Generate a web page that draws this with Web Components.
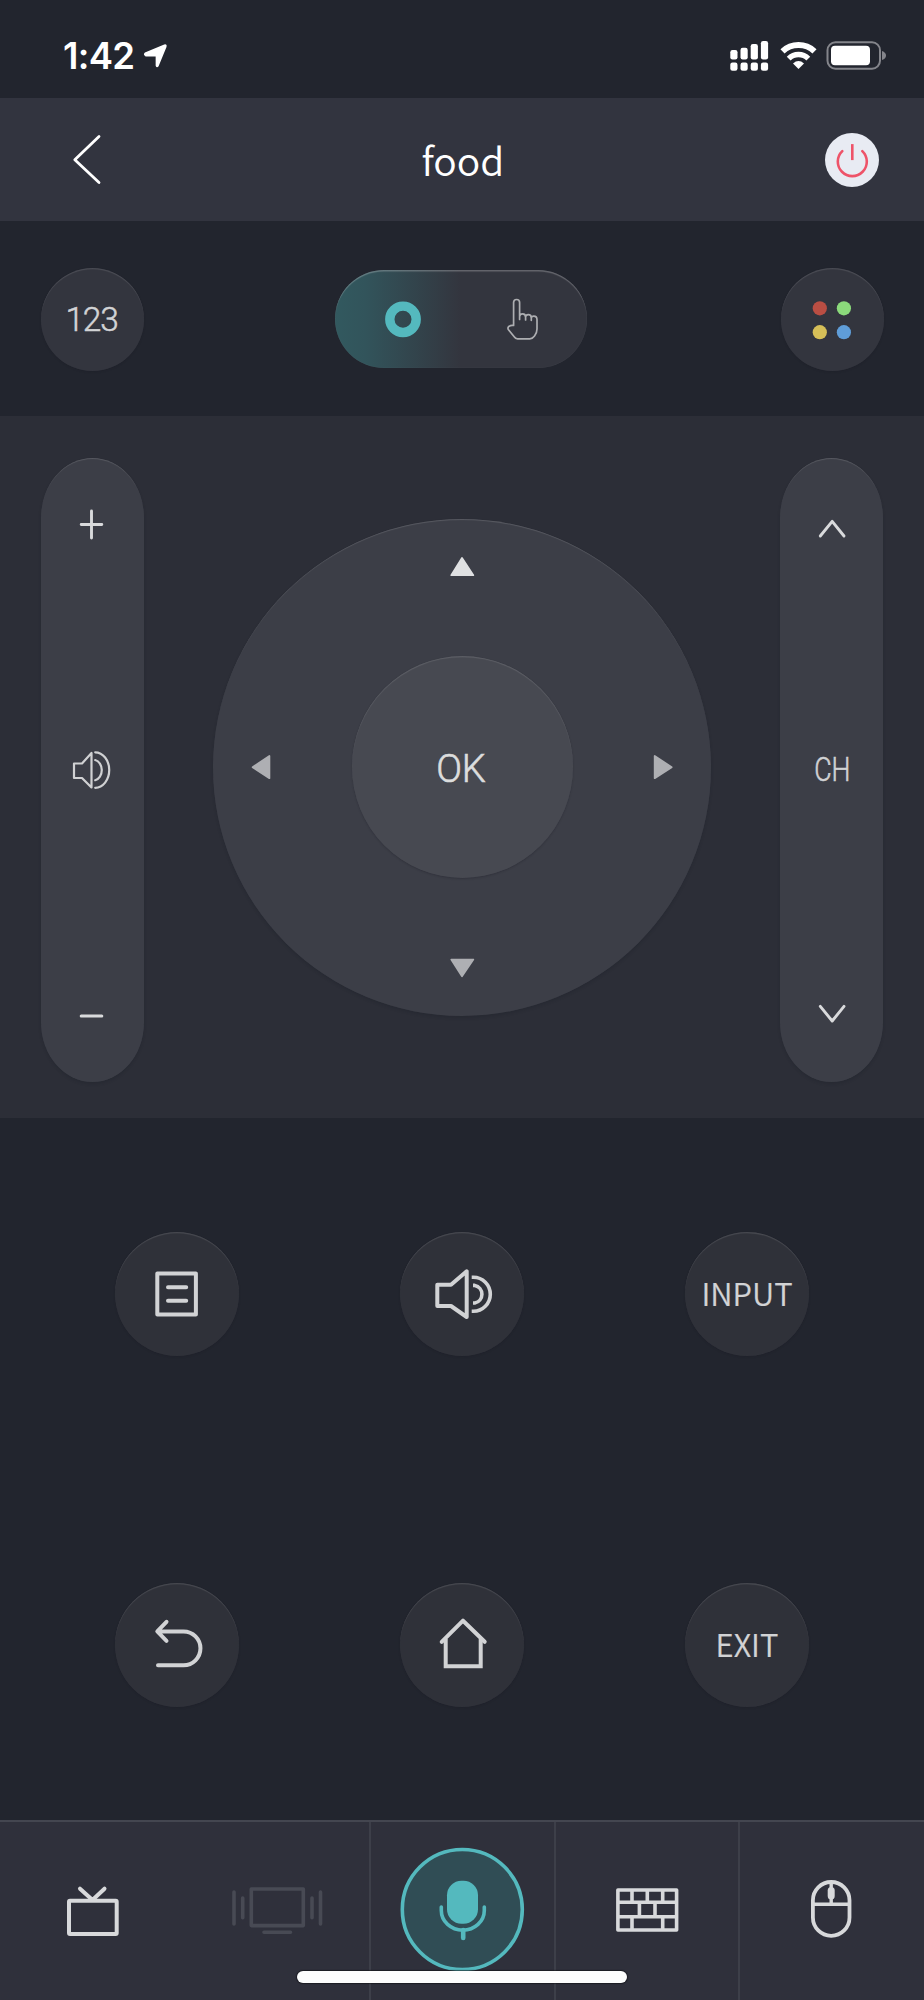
<!DOCTYPE html>
<html lang="en">
<head>
<meta charset="utf-8">
<title>TV Remote</title>
<style>
  html, body { margin: 0; background: #22252e; }
</style>
</head>
<body>
<remote-app></remote-app>
<script>
// Each icon: [viewBox, markup]. The rendered size equals the viewBox size.
const ICONS = {
  location: ['142 42 28 28', '<path d="M145.200 53.300 164.500 45.300q1.900-.7 1.300 1.300L158 65.800q-1.200 1.500-1.600-.2V55.800H146q-2.200-1.200-.8-2.500Z" fill="#fff" stroke="#fff" stroke-width="1.500" stroke-linejoin="round"/>'],
  signal: ['730 41 39 31', '<g fill="#fff"><rect x="730.300" y="50" width="7.200" height="9.500" rx="2.200"/><rect x="740.500" y="47.800" width="7.200" height="11.700" rx="2.200"/><rect x="750.700" y="44" width="7.200" height="15.500" rx="2.200"/><rect x="760.900" y="41" width="7.200" height="18.500" rx="2.200"/><rect x="730.300" y="62.500" width="7.200" height="8.300" rx="2.200"/><rect x="740.500" y="62.500" width="7.200" height="8.300" rx="2.200"/><rect x="750.700" y="62.500" width="7.200" height="8.300" rx="2.200"/><rect x="760.900" y="62.500" width="7.200" height="8.300" rx="2.200"/></g>'],
  wifi: ['780 41 37 29', '<g fill="none" stroke="#fff" stroke-width="6"><path d="M782.500 51.400a23.500 23.500 0 0 1 32 0"/><path d="M788.700 58.600a14 14 0 0 1 19.600 0" stroke-width="5.500"/></g><path d="M793 63.400q5.500-4.600 11 0L798.500 69Z" fill="#fff"/>'],
  battery: ['826 41 61 29', '<rect x="827.500" y="42.300" width="52.500" height="26.400" rx="8" fill="none" stroke="#84858b" stroke-width="2"/><rect x="831" y="45.700" width="39" height="19.500" rx="4" fill="#fff"/><path d="M882 51q4 1.500 4 4.500t-4 4.500Z" fill="#84858b"/>'],
  back: ['70 131 34 57', '<path d="M99 136.500 74.800 159.700 99 182.500" fill="none" stroke="#fff" stroke-width="2.800" stroke-linecap="round" stroke-linejoin="round"/>'],
  power: ['824 132.500 54 54', '<g fill="none" stroke="#ee5369" stroke-width="2.600" stroke-linecap="round"><path d="M851.300 143.600V159.600" stroke-linecap="butt" stroke-width="2.600"/><path d="M841.300 150.600a14.500 14.500 0 1 0 20 0"/></g>'],
  ring: ['386 301 36 36.500', '<circle cx="404" cy="319.300" r="13.200" fill="none" stroke="#54b9be" stroke-width="9.400"/>'],
  hand: ['507 298 34 43', '<path d="M514.600 325.500V302.500a3 3 0 0 1 6 0V319.500M520.600 316.500q.2-2.600 3-2.600 3 0 3 3.400V320M526.600 317q.2-2.300 2.700-2.300 3 0 3 3.200V320.300M532.300 318q.2-1.800 2.500-1.800 3.200 0 3.200 3.500V329q0 4-2.500 7-2 2.800-4.700 2.800H518.500q-2 0-3.300-2L509.300 329.500q-1-2 .8-3.200 1.500-1.300 4.500-.9" fill="none" stroke="#adaeb1" stroke-width="1.700" stroke-linecap="round" stroke-linejoin="round"/>'],
  colors: ['812 300 40 39', '<circle cx="819.800" cy="308.300" r="7.100" fill="#ba4e43"/><circle cx="843.900" cy="308.300" r="7.100" fill="#8bda7b"/><circle cx="819.800" cy="332.200" r="7.100" fill="#d6bf58"/><circle cx="843.900" cy="332.200" r="7.100" fill="#5f9dd8"/>'],
  plus: ['78 508 27 33', '<path d="M81.200 524.500H101.800M91.500 511V538" stroke="#d9dadc" stroke-width="2.900" stroke-linecap="round"/>'],
  minus: ['78 1008 27 16', '<path d="M81.200 1016H101.800" stroke="#d9dadc" stroke-width="3" stroke-linecap="round"/>'],
  volume: ['71 750 41 41', '<g fill="none" stroke="#d0d1d3" stroke-width="2.200" stroke-linejoin="round" stroke-linecap="round"><path d="M74 763.500H82L91.500 753V787.500L82 778H74Z"/><path d="M95.200 752.300a14 17.700 0 0 1 0 35.500M95.200 760a8.200 10.300 0 0 1 0 20.200" /></g>'],
  up: ['816 516 32 24', '<path d="M820.300 536 832.200 521.300 844 536" fill="none" stroke="#d9dadc" stroke-width="2.900" stroke-linecap="round" stroke-linejoin="round"/>'],
  down: ['816 1002 32 24', '<path d="M820.300 1006.300 832.200 1021 844 1006.300" fill="none" stroke="#d9dadc" stroke-width="2.900" stroke-linecap="round" stroke-linejoin="round"/>'],
  triUp: ['449 556 26 22', '<path d="M462 558 473.300 575.200H451.300Z" fill="#dfe0e2" stroke="#dfe0e2" stroke-width="1.800" stroke-linejoin="round"/>'],
  triDown: ['449 957 26 22', '<path d="M462 976.200 473.300 959.600H451.300Z" fill="#aeafb3" stroke="#aeafb3" stroke-width="1.800" stroke-linejoin="round"/>'],
  triLeft: ['250 754 22 26', '<path d="M252.600 767.200 269.400 756V778.200Z" fill="#aeafb3" stroke="#aeafb3" stroke-width="1.800" stroke-linejoin="round"/>'],
  triRight: ['652 754 22 26', '<path d="M671.700 767.200 654.700 756V778.200Z" fill="#aeafb3" stroke="#aeafb3" stroke-width="1.800" stroke-linejoin="round"/>'],
  menu: ['115 1232 124 124', '<g fill="none" stroke="#d2d3d5" stroke-width="4" stroke-linejoin="round" stroke-linecap="round"><path d="M157.300 1273.500H195.900V1314.500H157.300Z"/><path d="M168 1287.200H186.200M168 1300.800H186.200"/></g>'],
  mute: ['400 1232 124 124', '<g fill="none" stroke="#d2d3d5" stroke-width="4" stroke-linejoin="round"><path d="M437.300 1284.700H451L466.700 1271.300V1317L451 1306H437.300Z"/><path d="M471.700 1277.200H473.300a17 17 0 0 1 0 34H471.700M473 1285.400H474.800a9 9 0 0 1 0 17.600H473" stroke-width="3.600"/></g>'],
  undo: ['115 1582.500 124 124', '<g fill="none" stroke="#d2d3d5" stroke-width="4" stroke-linejoin="round" stroke-linecap="round"><path d="M166.500 1621.300 157.300 1630.900 166.500 1640.300M158 1630.900H183.500a16.900 16.900 0 0 1 0 33.900H158"/></g>'],
  home: ['400 1582.500 124 124', '<g fill="none" stroke="#d2d3d5" stroke-width="4" stroke-linecap="round" stroke-linejoin="round"><path d="M441.700 1641.300 463 1620.200 484.700 1641.300"/><path d="M445.700 1638.500V1665.700H480.700V1638.500" stroke-linecap="butt" stroke-linejoin="miter"/></g>'],
  tv: ['0 1822 184 175', '<g fill="none" stroke="#d8d9db" stroke-width="4" stroke-linejoin="round" stroke-linecap="round"><rect x="69" y="1900.700" width="47.700" height="33.300" rx="1"/><path d="M80 1888.700 92.500 1900 104.500 1888.700"/></g>'],
  cast: ['184 1822 185 175', '<g fill="none" stroke="#484a54" stroke-width="3.600" stroke-linejoin="round" stroke-linecap="round"><rect x="251.300" y="1889" width="52" height="36.600"/><path d="M234 1892V1924M242.700 1898V1917.700M312 1898V1917.700M320.500 1892V1924M264 1932.300H290.500"/></g>'],
  mic: ['400 1847 125 125', '<circle cx="462.300" cy="1909.500" r="60" fill="#304d55" stroke="#54b9be" stroke-width="3.600"/><rect x="447" y="1880.800" width="31" height="43" rx="14.500" fill="#54b9be"/><path d="M441.300 1907V1910.500a21.500 19.700 0 0 0 43 0V1907" fill="none" stroke="#54b9be" stroke-width="3.600" stroke-linecap="round"/><path d="M463.200 1930V1938" stroke="#54b9be" stroke-width="4.600" stroke-linecap="round"/>'],
  keyboard: ['556 1822 182 175', '<path d="M617.900 1890H676.600V1930H617.900ZM617.900 1902.200H676.600M617.900 1916.800H676.600M632 1890V1902M647.300 1890V1902M662.700 1890V1902M639.400 1902V1917M655 1902V1917M632 1917V1930M662.700 1917V1930" fill="none" stroke="#d8d9db" stroke-width="3.600" stroke-linejoin="round"/>'],
  mouse: ['740 1822 184 175', '<g fill="none" stroke="#d8d9db" stroke-width="3.800"><rect x="812.900" y="1882" width="36.600" height="53.800" rx="18.300"/><path d="M813 1904.200H849.500M831.200 1882V1904" stroke-width="3.400"/></g><rect x="827.700" y="1887" width="7" height="12.500" rx="3.500" fill="#d8d9db"/>'],
};

function define(name, html, setup) {
  const template = document.createElement('template');
  template.innerHTML = html;
  customElements.define(name, class extends HTMLElement {
    constructor() {
      super();
      this.attachShadow({ mode: 'open' }).append(template.content.cloneNode(true));
    }
    connectedCallback() { if (setup) setup(this); }
  });
}

define('rc-icon', `<style>:host{display:block;flex:none;line-height:0} svg{display:block;overflow:visible}</style><div></div>`, el => {
  const [box, body] = ICONS[el.getAttribute('name')];
  const [, , w, h] = box.split(' ');
  el.shadowRoot.querySelector('div').innerHTML =
    `<svg viewBox="${box}" width="${w}" height="${h}" aria-hidden="true">${body}</svg>`;
});

define('rc-key', `<style>
  :host { display:flex; align-items:center; justify-content:center; box-sizing:border-box; flex:none;
    width:var(--w,124px); height:var(--h,124px); border-radius:50%;
    background:var(--fill,#2f3139); color:#d2d3d5;
    box-shadow: inset 0 1.500px 1px -.3px rgba(255,255,255,.12), inset 0 0 1px rgba(255,255,255,.05), 0 1px 2px rgba(25,26,38,.3);
    white-space:nowrap; }
</style><slot></slot>`);

define('rc-status', `<style>
  :host { display:flex; align-items:flex-start; height:98px; padding:0 37px 0 63px; box-sizing:border-box; background:#22252e; color:#fff; }
  .time { font:600 36.500px/44px Inter,sans-serif; margin-top:34px; letter-spacing:-.7px; width:71px; white-space:nowrap; }
  .loc { margin:42px auto 0 8px; }
  .sys { display:flex; margin-top:41px; }
  .sys :nth-child(2) { margin:0 9px 0 11px; }
</style>
<div class="time">1:42</div><rc-icon class="loc" name="location"></rc-icon>
<div class="sys"><rc-icon name="signal"></rc-icon><rc-icon name="wifi"></rc-icon><rc-icon name="battery"></rc-icon></div>`);

define('rc-header', `<style>
  :host { display:grid; grid-template-columns:1fr auto 1fr; align-items:center; height:123px; padding:0 45.300px 0 70px; box-sizing:border-box; background:#32343f; }
  h1 { margin:-2px 0 0 -23px; font:350 39px/50px "Noto Sans CJK SC",sans-serif; color:#fff; }
  .p { --w:54px; --h:54px; --fill:#e8ebf3; justify-self:end; box-shadow:none; }
</style>
<rc-icon name="back"></rc-icon><h1><slot></slot></h1><rc-key class="p"><rc-icon name="power"></rc-icon></rc-key>`);

define('rc-switch', `<style>
  :host { display:flex; justify-content:space-between; align-items:center; width:252px; height:98px; box-sizing:border-box; padding:1px 47px 0 50px; border-radius:50px;
    background:linear-gradient(90deg,#32595f 0,#32545b 12%,#33353e 50%);
    box-shadow: inset 0 2px 1px -.5px rgba(255,255,255,.24), inset 0 0 1px rgba(255,255,255,.12); }
</style><slot></slot>`);

define('rc-modes', `<style>
  :host { display:flex; align-items:center; justify-content:space-between; height:195px; padding:1px 40.500px 0 41px; box-sizing:border-box; background:#22252e; }
  rc-key { --w:103px; --h:103px; --fill:#33353e; }
  .n { font:300 33.500px/40px Roboto,sans-serif; -webkit-text-stroke:.5px; letter-spacing:-1.300px; margin:2px 0 0 -2px; }
  rc-switch { margin:-1px 0 0 -2px; }
</style>
<rc-key><span class="n">123</span></rc-key>
<rc-switch><rc-icon name="ring"></rc-icon><rc-icon name="hand"></rc-icon></rc-switch>
<rc-key><rc-icon name="colors"></rc-icon></rc-key>`);

define('rc-rocker', `<style>
  :host { display:flex; flex-direction:column; align-items:center; justify-content:space-between; box-sizing:border-box; width:103px; height:623.500px;
    border-radius:52px / 60px; background:#3c3e47; color:#d0d1d3;
    box-shadow: inset 0 2px 1px -1px rgba(255,255,255,.15), inset 0 0 1px rgba(255,255,255,.05), 0 2px 3px rgba(25,26,38,.22); }
</style><slot></slot>`);

define('rc-dpad', `<style>
  :host { display:grid; grid-template:137px 222px 138px / 138.500px 221px 138.500px; place-items:center; width:498px; height:497px; border-radius:50%; background:#3c3e47;
    box-shadow: inset 0 2px 1px -1px rgba(255,255,255,.15), inset 0 0 1px rgba(255,255,255,.05), 0 2px 3px rgba(25,26,38,.22); }
  .up { grid-area:1/2; margin-bottom:41px; } .left { grid-area:2/1; margin-right:43px; }
  .right { grid-area:2/3; margin-left:42px; } .down { grid-area:3/2; margin-top:42px; }
  .up, .down { margin-right:1px; }
  .ok { grid-area:2/2; --w:221px; --h:222px; --fill:#474951; color:#dcdddd; }
  .t { font:300 38px/44px Roboto,sans-serif; -webkit-text-stroke:.6px; margin:3px 2px 0 0; }
</style>
<rc-icon class="up" name="triUp"></rc-icon><rc-icon class="left" name="triLeft"></rc-icon>
<rc-key class="ok"><span class="t">OK</span></rc-key>
<rc-icon class="right" name="triRight"></rc-icon><rc-icon class="down" name="triDown"></rc-icon>`);

define('rc-pad', `<style>
  :host { display:flex; justify-content:space-between; align-items:flex-start; height:702px; padding:42px 41px 0 41px; box-sizing:border-box; background:#2c2e37; }
  .vol { padding:50px 2px 57.500px 0; } .ch { padding:58px 0 55.500px 1px; }
  .vol .mid { margin:-9px 0 0; }
  .c { font:300 33px/40px Roboto,sans-serif; -webkit-text-stroke:.6px; transform:scaleX(.81); margin-top:-2px; }
  rc-dpad { margin:61px 0 0 0; }
</style>
<rc-rocker class="vol"><rc-icon name="plus"></rc-icon><rc-icon class="mid" name="volume"></rc-icon><rc-icon name="minus"></rc-icon></rc-rocker>
<rc-dpad></rc-dpad>
<rc-rocker class="ch"><rc-icon name="up"></rc-icon><span class="c">CH</span><rc-icon name="down"></rc-icon></rc-rocker>`);

define('rc-keys', `<style>
  :host { display:grid; grid-template-columns:repeat(3,124px); justify-content:space-between; align-content:start; row-gap:226.500px; height:702px; padding:114px 115px 0; box-sizing:border-box; background:#22252e; }
  span { font:350 31px/40px "Noto Sans CJK SC",sans-serif; -webkit-text-stroke:.2px; margin-top:-2px; }
</style>
<rc-key><rc-icon name="menu"></rc-icon></rc-key><rc-key><rc-icon name="mute"></rc-icon></rc-key><rc-key><span>INPUT</span></rc-key>
<rc-key><rc-icon name="undo"></rc-icon></rc-key><rc-key><rc-icon name="home"></rc-icon></rc-key><rc-key><span>EXIT</span></rc-key>`);

define('rc-tabs', `<style>
  :host { display:grid; grid-template-columns:184px 185px 187px 184px 184px; height:180px; box-sizing:border-box; border-top:2px solid #444650; background:#2f303b; position:relative; overflow:hidden; }
  div { box-sizing:border-box; }
  .mic { border-left:2px solid #3d3f49; border-right:2px solid #3d3f49; padding:25px 0 0 29px; }
  .key { border-right:2px solid #3d3f49; }
  .bar { position:absolute; left:297px; top:148.500px; width:330px; height:12px; border-radius:7px; background:#fdfdfd; box-shadow:0 0 1px 1px rgba(15,15,20,.6); }
</style>
<div><rc-icon name="tv"></rc-icon></div><div><rc-icon name="cast"></rc-icon></div>
<div class="mic"><rc-icon name="mic"></rc-icon></div>
<div class="key"><rc-icon name="keyboard"></rc-icon></div><div><rc-icon name="mouse"></rc-icon></div>
<div class="bar"></div>`);

define('remote-app', `<style>
  :host { display:flex; flex-direction:column; width:924px; height:2000px; overflow:hidden; background:#22252e; }
  :host > * { flex:none; }
</style>
<rc-status></rc-status><rc-header>food</rc-header><rc-modes></rc-modes><rc-pad></rc-pad><rc-keys></rc-keys><rc-tabs></rc-tabs>`);
</script>
</body>
</html>
